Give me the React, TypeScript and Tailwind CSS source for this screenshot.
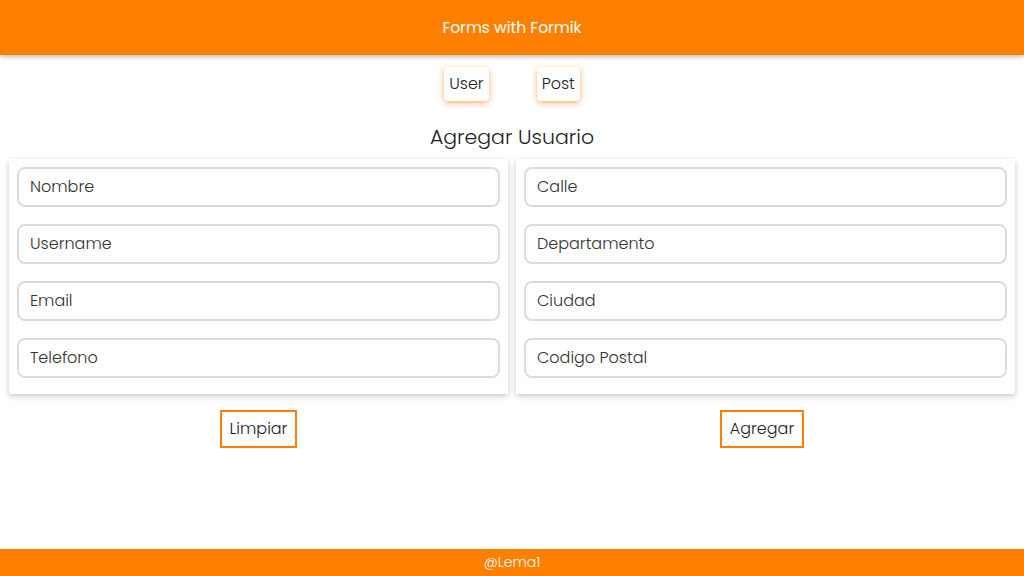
import React from 'react';

const leftFields = ['Nombre', 'Username', 'Email', 'Telefono'];
const rightFields = ['Calle', 'Departamento', 'Ciudad', 'Codigo Postal'];

const Field: React.FC<{ label: string }> = ({ label }) => (
  <input
    placeholder={label}
    className="h-10 w-full rounded-lg border-2 border-[#dcdcdc] px-[11px] text-[16px] font-light text-[#333] outline-none placeholder:text-[#333]"
  />
);

const App: React.FC = () => {
  return (
    <div
      className="flex min-h-[576px] flex-col bg-white text-[#222]"
      style={{ fontFamily: '"Poppins", "Open Sans", "Noto Sans", sans-serif' }}
    >
      <header className="flex h-[55px] items-center justify-center bg-[#ff8000] shadow-[0_2px_4px_rgba(0,0,0,0.25)]">
        <h1 className="text-[15.5px] font-normal text-white">Forms with Formik</h1>
      </header>

      <nav className="mt-3 flex justify-center gap-12">
        <button className="h-[34px] rounded bg-white px-[5px] text-[16px] font-light shadow-[0_2px_6px_rgba(255,128,0,0.6)]">
          User
        </button>
        <button className="h-[34px] rounded bg-white px-[5px] text-[16px] font-light shadow-[0_2px_6px_rgba(255,128,0,0.6)]">
          Post
        </button>
      </nav>

      <h2 className="mt-[21px] text-center text-[20.5px] font-light">Agregar Usuario</h2>

      <main className="mt-[6px] grid grid-cols-2 gap-2 px-[9px]">
        {[leftFields, rightFields].map((fields, i) => (
          <div key={i} className="flex flex-col gap-[17px] bg-white px-2 pt-2 pb-4 shadow-[0_2px_6px_rgba(0,0,0,0.22)]">
            {fields.map(f => (
              <Field key={f} label={f} />
            ))}
          </div>
        ))}
      </main>

      <div className="mt-4 grid grid-cols-2 gap-2 px-[9px]">
        <div className="flex justify-center">
          <button className="h-[38px] border-2 border-[#ff8000] px-2 text-[16px] font-light">Limpiar</button>
        </div>
        <div className="flex justify-center pr-[7px]">
          <button className="h-[38px] border-2 border-[#ff8000] px-2 text-[16px] font-light">Agregar</button>
        </div>
      </div>

      <footer className="mt-auto flex h-[27px] items-center justify-center bg-[#ff8000] text-[14px] font-light text-white">
        @Lema1
      </footer>
    </div>
  );
};

export default App;
